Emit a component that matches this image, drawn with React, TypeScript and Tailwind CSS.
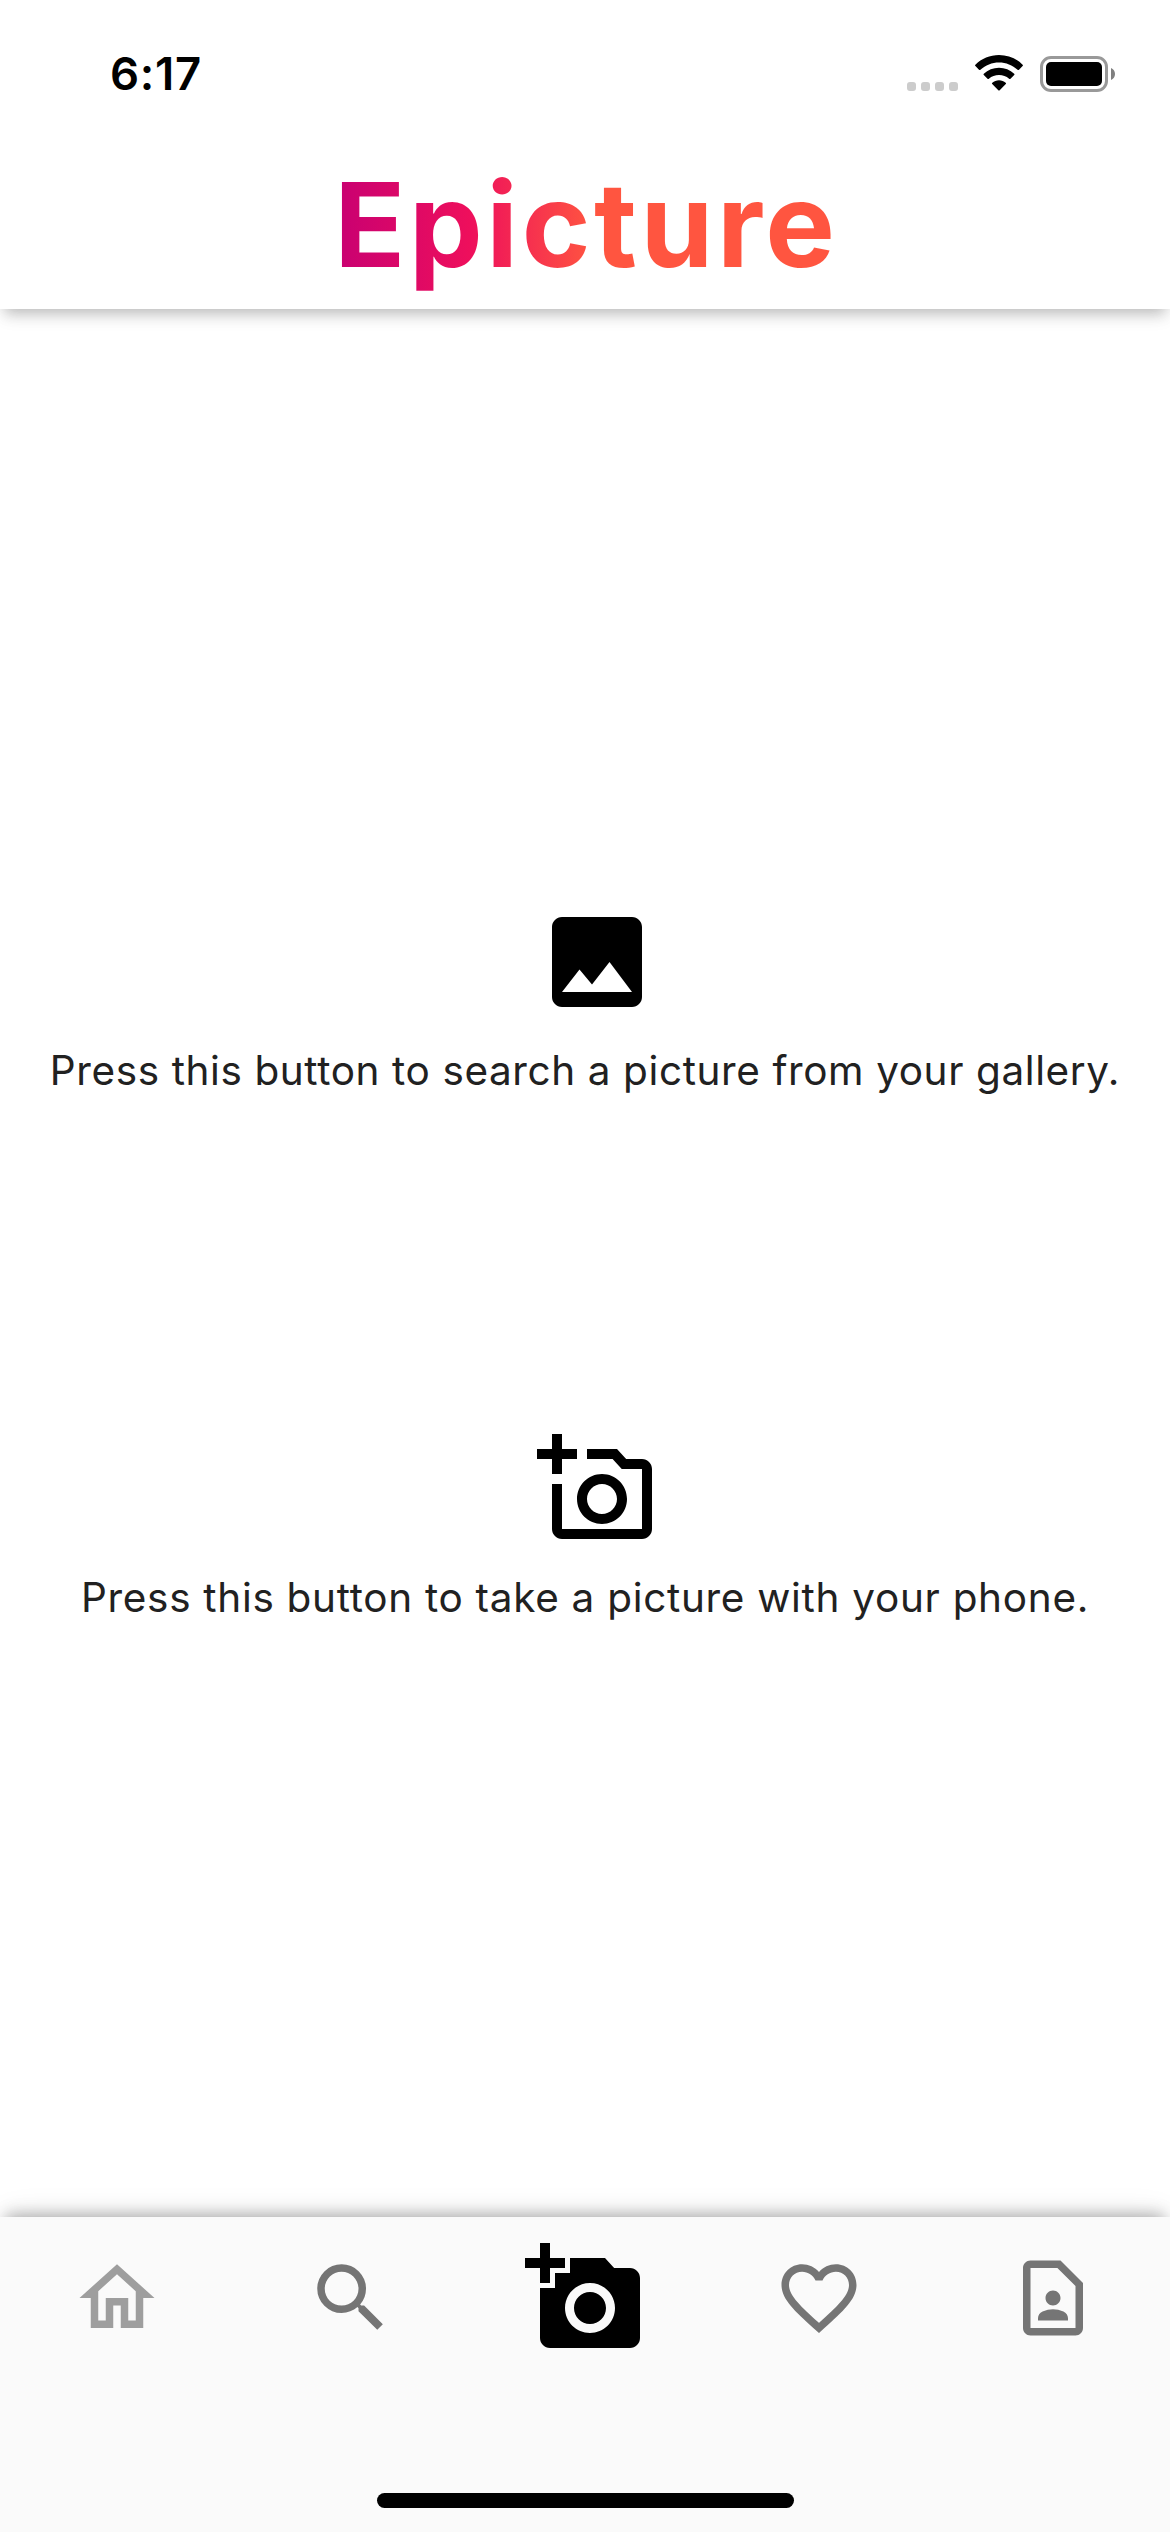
import React from "react";
import {
  MdAddAPhoto,
  MdFavoriteBorder,
  MdOutlineAddAPhoto,
  MdOutlineContactPage,
  MdOutlineHome,
  MdPhoto,
  MdSearch,
} from "react-icons/md";

function StatusBar() {
  return (
    <div className="flex h-[141px] items-start justify-between pl-[110px] pr-[55px]">
      <span className="mt-[46px] text-[45.5px] font-semibold leading-[56px] tracking-[0.7px] text-black">
        6:17
      </span>
      <div className="mt-[55px] flex h-[37px] items-start">
        <div className="mt-[27px] flex gap-[5px]">
          {[0, 1, 2, 3].map((dot) => (
            <span key={dot} className="size-[9px] rounded-[3px] bg-[#cccccc]" />
          ))}
        </div>
        <svg className="ml-[17px] h-[36px] w-[48px]" viewBox="0 0 48 36" fill="black">
          <path d="M24 0C33 0 41.500 3.500 47.600 9.700Q48.300 10.400 47.600 11.100L44 14.800Q43.300 15.400 42.600 14.800C37.500 10 31 7.400 24 7.400S10.500 10 5.400 14.800Q4.700 15.400 4 14.800L.4 11.100Q-.3 10.400 .4 9.700C6.500 3.500 15 0 24 0Z" />
          <path d="M24 12.800C29.800 12.800 35.100 15 39.200 18.700Q39.900 19.400 39.200 20.100L35.500 23.700Q34.800 24.300 34.100 23.700C31.300 21.400 27.800 20.100 24 20.100S16.700 21.400 13.900 23.700Q13.200 24.300 12.500 23.700L8.800 20.100Q8.100 19.400 8.800 18.700C12.900 15 18.200 12.800 24 12.800Z" />
          <path d="M24 25.200C26.500 25.200 28.900 26.100 30.700 27.700Q31.500 28.400 30.800 29.100L24.700 35.200Q24 35.900 23.300 35.200L17.200 29.100Q16.500 28.400 17.300 27.700C19.100 26.100 21.500 25.200 24 25.200Z" />
        </svg>
        <div className="ml-[17px] mt-px flex items-center gap-[3px]">
          <div className="h-[36px] w-[68px] rounded-[11px] border-[3px] border-[#999999] p-[3px]">
            <div className="h-full rounded-[5px] bg-black" />
          </div>
          <svg className="h-[12px] w-[4px]" viewBox="0 0 4 12" fill="#808080">
            <path d="M0 0C2.400 1 4 3.300 4 6S2.400 11 0 12Z" />
          </svg>
        </div>
      </div>
    </div>
  );
}

function Header() {
  return (
    <header className="relative h-[309px] bg-white shadow-[0_9px_12px_-6px_rgba(0,0,0,0.17),0_12px_15px_-3px_rgba(0,0,0,0.08),0_3px_20px_0_rgba(0,0,0,0.06)]">
      <StatusBar />
      <div className="flex h-[168px] justify-center">
        <h1 className="ml-[3px] h-[168px] bg-[linear-gradient(90deg,#c80072_0px,#ee0f5c_136px,#ff5540_260px)] bg-clip-text text-[117px] font-bold leading-[168px] tracking-[3.6px] text-transparent">
          Epicture
        </h1>
      </div>
    </header>
  );
}

export default function App() {
  return (
    <div className="flex h-[2532px] w-[1170px] flex-col overflow-hidden bg-white font-['Inter',sans-serif]">
      <Header />
      <main className="flex flex-1 flex-col items-center pt-[593px] text-[40.5px] leading-[60px] text-[#212121]">
        <button className="flex flex-col items-center">
          <MdPhoto className="ml-[24px] size-[120px] text-black" />
          <span className="mt-[19px] whitespace-nowrap tracking-[0.6px]">
            Press this button to search a picture from your gallery.
          </span>
        </button>
        <button className="mt-[328px] flex flex-col items-center">
          <MdOutlineAddAPhoto className="ml-[24px] size-[120px] text-black" />
          <span className="mt-[19px] whitespace-nowrap tracking-[0.7px]">
            Press this button to take a picture with your phone.
          </span>
        </button>
      </main>
      <nav className="relative flex h-[315px] flex-col justify-between bg-[#fafafa] pb-[24px] pt-[21px] shadow-[0_-9px_14px_-6px_rgba(0,0,0,0.26),0_-6px_30px_-6px_rgba(0,0,0,0.12)]">
        <div className="grid h-[120px] grid-cols-5 place-items-center text-[#757575]">
          <MdOutlineHome className="size-[90px] text-[#9e9e9e]" />
          <MdSearch className="size-[90px]" />
          <MdAddAPhoto className="size-[120px] text-black" />
          <MdFavoriteBorder className="size-[90px]" />
          <MdOutlineContactPage className="size-[90px]" />
        </div>
        <div className="mx-auto h-[15px] w-[417px] rounded-full bg-black" />
      </nav>
    </div>
  );
}
